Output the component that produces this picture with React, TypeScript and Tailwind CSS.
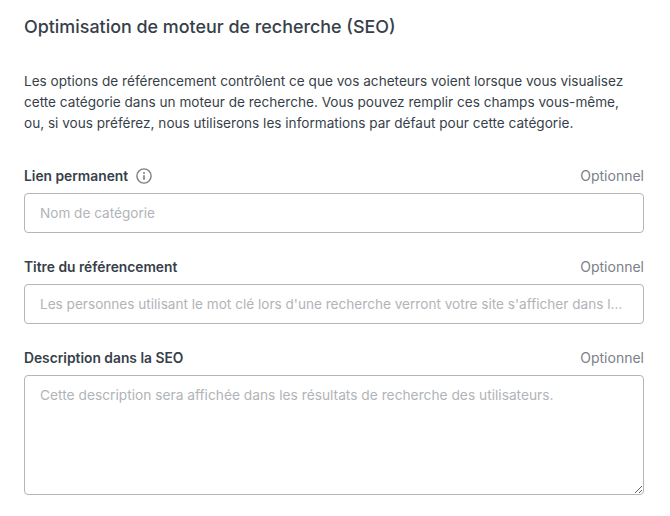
const font = "font-['Inter',sans-serif]"

const Label = ({ text, info }: { text: string; info?: boolean }) => {
    return (
        <div className="flex items-center justify-between h-5 mb-[7px]">
            <div className="flex items-center gap-2">
                <span className="text-[13.8px] font-semibold text-[#373f4a]">{text}</span>
                {info && (
                    <svg viewBox="0 0 16 16" className="w-4 h-4 text-[#7b8088]" fill="none" stroke="currentColor">
                        <circle cx="8" cy="8" r="7.1" strokeWidth="1.4" />
                        <circle cx="8" cy="4.9" r="1" fill="currentColor" stroke="none" />
                        <path d="M8 7.2v4.6" strokeWidth="1.7" />
                    </svg>
                )}
            </div>
            <span className="text-[14px] leading-5 text-[#7b8088]">Optionnel</span>
        </div>
    )
}

const inputClass =
    "block w-full h-10 rounded-[4px] border border-[#b3b5b9] bg-white pl-[15px] pr-4 text-[13.6px] text-[#373f4a] outline-none placeholder:text-[#b1b4b8] placeholder:opacity-100 text-ellipsis"

export default function App() {
    return (
        <div className={`${font} w-[670px] h-[516px] overflow-hidden bg-white pl-6 pr-[26px] pt-4`}>
            <h1 className="text-[17.9px] leading-[22px] font-medium text-[#373f4a]">
                Optimisation de moteur de recherche (SEO)
            </h1>
            <p className="mt-[33px] text-[13.6px] leading-[21px] text-[#373f4a]">
                Les options de référencement contrôlent ce que vos acheteurs voient lorsque vous visualisez
                <br />
                cette catégorie dans un moteur de recherche. Vous pouvez remplir ces champs vous-même,
                <br />
                ou, si vous préférez, nous utiliserons les informations par défaut pour cette catégorie.
            </p>
            <div className="mt-[32px] flex flex-col gap-[24px]">
                <div>
                    <Label text="Lien permanent" info />
                    <input className={inputClass} placeholder="Nom de catégorie" />
                </div>
                <div>
                    <Label text="Titre du référencement" />
                    <input
                        className={inputClass}
                        placeholder="Les personnes utilisant le mot clé lors d'une recherche verront votre site s'afficher dans la liste des résultats."
                    />
                </div>
                <div>
                    <Label text="Description dans la SEO" />
                    <textarea
                        className="block w-full h-[120px] rounded-[4px] border border-[#b3b5b9] bg-white pl-[15px] pr-4 py-[9px] text-[13.75px] leading-[20px] text-[#373f4a] outline-none placeholder:text-[#b1b4b8] placeholder:opacity-100"
                        placeholder="Cette description sera affichée dans les résultats de recherche des utilisateurs."
                    />
                </div>
            </div>
        </div>
    )
}
